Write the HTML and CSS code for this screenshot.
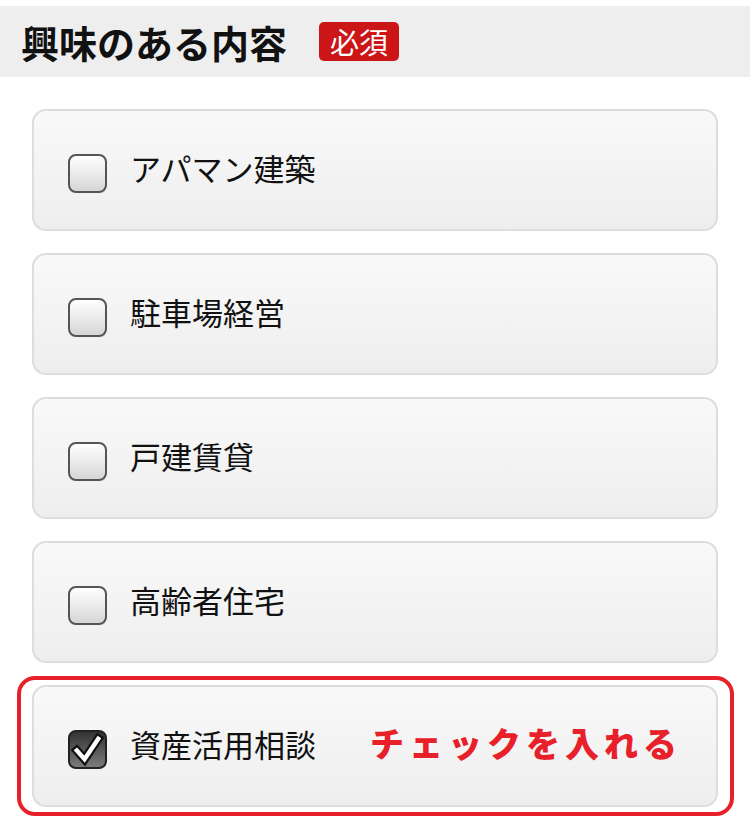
FILE: index.html
```html
<!DOCTYPE html>
<html lang="ja">

<head>
    <meta charset="UTF-8">
    <meta name="viewport" content="width=device-width, initial-scale=1.0">
    <title>興味のある内容</title>
    <link rel="stylesheet" href="styles.css">
</head>

<body>
    <section class="form-field">
        <h2 class="field-title">興味のある内容<span class="required">必須</span></h2>
        <ul class="choice-list">
            <li class="choice">
                <label><span class="check"></span>アパマン建築</label>
            </li>
            <li class="choice">
                <label><span class="check"></span>駐車場経営</label>
            </li>
            <li class="choice">
                <label><span class="check"></span>戸建賃貸</label>
            </li>
            <li class="choice">
                <label><span class="check"></span>高齢者住宅</label>
            </li>
            <li class="choice marked">
                <label>
                    <span class="check checked">
                        <svg viewBox="0 0 40 40" width="39" height="39">
                            <path d="M9 21 L17 30 L31 9" fill="none" stroke="#111" stroke-width="9" stroke-linejoin="miter" stroke-linecap="square"/>
                            <path d="M9 21 L17 30 L31 9" fill="none" stroke="#fff" stroke-width="4.5" stroke-linejoin="miter" stroke-linecap="square"/>
                        </svg>
                    </span>資産活用相談
                </label>
                <span class="note">チェックを入れる</span>
            </li>
        </ul>
    </section>
</body>

</html>
```

FILE: styles.css
```css
body {
    margin: 0;
    padding-bottom: 14px;
    background: #fff;
    font-family: "Noto Sans CJK JP", "Noto Sans", sans-serif;
    color: #111;
}

.field-title {
    margin: 6px 0 0;
    height: 71px;
    padding-left: 21px;
    display: flex;
    align-items: center;
    background: #eeeeee;
    font-size: 38px;
    font-weight: 700;
    line-height: 1;
}
.required {
    display: flex;
    align-items: center;
    height: 39px;
    margin-left: 32px;
    padding: 0 11px;
    border-radius: 5px;
    background: #cc1517;
    color: #fff;
    font-size: 29px;
    font-weight: 400;
}

.choice-list {
    list-style: none;
    margin: 32px 0 0 32px;
    padding: 0;
    width: 686px;
    display: flex;
    flex-direction: column;
    gap: 22px;
}
.choice {
    position: relative;
    box-sizing: border-box;
    height: 122px;
    padding: 0 0 6px 34px;
    display: flex;
    align-items: center;
    border: 2px solid #dddddd;
    border-radius: 14px;
    background: linear-gradient(#f9f9f9, #eeeeee);
}
.choice label {
    display: flex;
    align-items: center;
    font-size: 31px;
    line-height: 1;
    color: #111;
}
.check {
    box-sizing: border-box;
    width: 39px;
    height: 39px;
    margin: 13px 23px 0 0;
    border: 2.5px solid #555;
    border-radius: 8px;
    background: linear-gradient(#ffffff, #d6d6d6);
}
.check.checked {
    position: relative;
    border-color: #222;
    background: linear-gradient(#333333, #7a7a7a);
}
.check.checked svg {
    position: absolute;
    left: -2.5px;
    top: -2.5px;
}
.note {
    margin-left: 54px;
    font-size: 34px;
    font-weight: 900;
    letter-spacing: 5px;
    color: #e8202a;
    line-height: 1;
}

/* red annotation frame */
.marked::after {
    content: "";
    position: absolute;
    top: -11px;
    bottom: -11px;
    left: -17px;
    right: -18px;
    border: 4px solid #e8202a;
    border-radius: 18px;
    pointer-events: none;
}
```
